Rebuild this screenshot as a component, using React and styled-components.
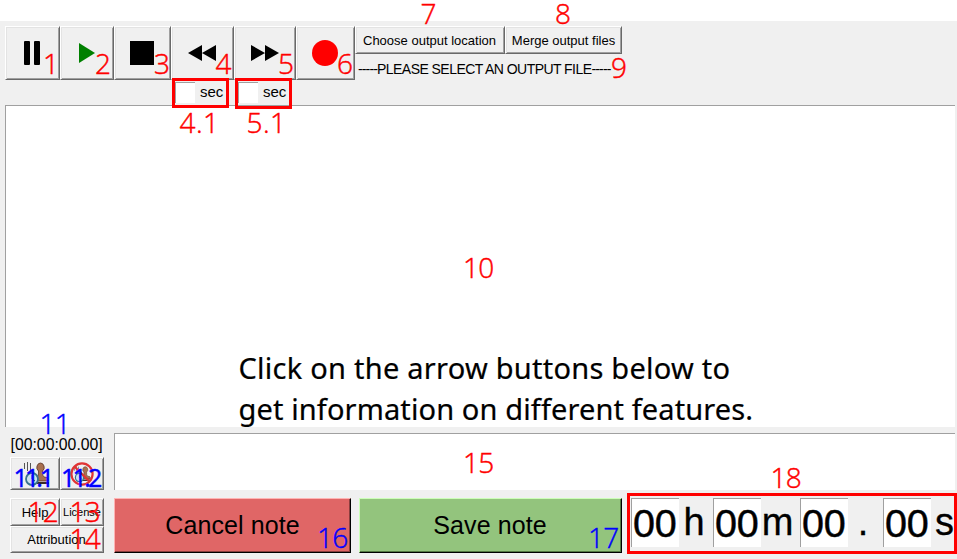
import React from "react";
import styled, { createGlobalStyle } from "styled-components";

const Global = createGlobalStyle`
  * { box-sizing: border-box; }
  body { margin: 0; background: #fff; overflow: hidden; }
`;

const Page = styled.div`
  position: relative;
  width: 957px;
  height: 559px;
  padding-top: 21px;
  overflow: hidden;
  font-family: "Liberation Sans", Arial, sans-serif;
  color: #000;
  background: #fff;
`;

const Window = styled.main`
  height: 538px;
  padding: 5px 2px 0 5px;
  display: flex;
  flex-direction: column;
  background: #f0f0f0;
`;

const Toolbar = styled.header`
  display: flex;
  height: 79px;
  align-items: flex-start;
`;

const Button = styled.button`
  display: flex;
  align-items: center;
  justify-content: center;
  flex: none;
  width: ${(p) => p.$w}px;
  height: ${(p) => p.$h}px;
  margin: 0;
  padding: 0 ${(p) => p.$nudge || 0}px 0 0;
  border: 1px solid;
  border-color: #fff #696969 #696969 #fff;
  box-shadow: inset 1px 1px #e3e3e3, inset -1px -1px #a0a0a0;
  background: #f0f0f0;
  color: #000;
  font-family: inherit;
  font-size: ${(p) => p.$size || 13}px;
  letter-spacing: ${(p) => p.$track || 0}px;
  white-space: nowrap;
`;

const NoteButton = styled(Button)`
  font-size: 25px;
  letter-spacing: 0.1px;
  background: ${(p) => p.$bg};
  border-color: ${(p) => p.$light} #000 #000 ${(p) => p.$light};
  box-shadow: inset -1px -1px ${(p) => p.$shade};
`;

const SeekColumn = styled.div`
  display: flex;
  flex-direction: column;
`;

const Seconds = styled.div`
  display: flex;
  width: 57px;
  height: ${(p) => p.$h}px;
  margin: -2px 0 0 1px;
  padding: 1px 0 0 0;
  border: 3px solid #f00;
  font-size: 15px;
  line-height: 20px;
  z-index: 1;
`;

const Entry = styled.div`
  flex: none;
  width: ${(p) => p.$w}px;
  height: ${(p) => p.$h}px;
  border: solid #a0a0a0;
  border-width: 1px 0 0 1px;
  background: #fff;
`;

const Unit = styled.span`
  margin-left: 5px;
`;

const OutputColumn = styled.div`
  display: flex;
  flex-direction: column;
`;

const Row = styled.div`
  display: flex;
`;

const Status = styled.div`
  margin: 7px 0 0 3px;
  font-size: 14px;
  line-height: 17px;
  letter-spacing: -0.55px;
  white-space: nowrap;
`;

const Dashes = styled.span`
  letter-spacing: -0.85px;
`;

const Notes = styled.section`
  height: 322px;
  border: solid #a0a0a0;
  border-width: 1px 0 0 1px;
  background: #fff;
`;

const Footer = styled.footer`
  display: grid;
  grid-template-columns: 109px 841px;
  padding-top: 6px;
`;

const SidePanel = styled.div`
  padding: 0 0 0 5px;
`;

const Stamp = styled.div`
  height: 24px;
  font-size: 15.8px;
  line-height: 23px;
  white-space: nowrap;
  margin-left: 0.5px;
`;

const HelpGroup = styled.div`
  margin-top: 8px;
`;

const Actions = styled.div`
  display: flex;
  gap: 8px;
  margin-top: 8px;
`;

const Timer = styled.div`
  display: flex;
  width: 330px;
  height: 61px;
  margin: -5px -2px 0 -3px;
  padding: 2px 0 0 1px;
  border: 3px solid #f00;
  flex: none;
  font-size: 39.5px;
  line-height: 48px;
`;

const TimeField = styled(Entry)`
  width: 48px;
  height: 49px;
  padding-left: 1px;
  letter-spacing: -0.3px;
  white-space: nowrap;
  -webkit-text-stroke: 0.5px #000;
`;

const TimeUnit = styled.span`
  flex: none;
  width: ${(p) => p.$w}px;
  padding-right: ${(p) => p.$end || 0}px;
  font-size: 38px;
  text-align: center;
  -webkit-text-stroke: 0.3px #000;
`;

const Mark = styled.span`
  position: absolute;
  left: ${(p) => p.$x}px;
  top: ${(p) => p.$base - 26}px;
  font: ${(p) => p.$weight || 300} ${(p) => p.$size || 28}px/30px "Open Sans", "Noto Sans", sans-serif;
  letter-spacing: ${(p) => p.$track ?? -0.7}px;
  color: ${(p) => (p.$blue ? "#00f" : "#f00")};
  -webkit-text-stroke: 0.45px currentColor;
  white-space: nowrap;
  z-index: 2;
`;

const Caption = styled.p`
  position: absolute;
  left: 238.500px;
  top: 347px;
  margin: 0;
  font: 400 29px/41px "Noto Sans", "Open Sans", sans-serif;
  white-space: nowrap;
  -webkit-text-stroke: 0.2px #000;
`;

const Line = styled.span`
  display: block;
  letter-spacing: ${(p) => p.$track}px;
`;

const Svg = styled.svg`
  display: block;
  flex: none;
  overflow: visible;
`;

const PauseIcon = () => (
  <Svg width="16" height="24"><rect width="6" height="24" rx="1" /><rect x="10" width="6" height="24" rx="1" /></Svg>
);
const PlayIcon = () => (
  <Svg width="16" height="20"><path d="M0 0 16 10 0 20Z" fill="#008000" /></Svg>
);
const StopIcon = () => (
  <Svg width="24" height="24"><rect width="24" height="24" /></Svg>
);
const RewindIcon = () => (
  <Svg width="28" height="16"><path d="M0 8 14 0V16ZM14 8 28 0V16Z" /></Svg>
);
const ForwardIcon = () => (
  <Svg width="28" height="16"><path d="M0 0 14 8 0 16ZM14 0 28 8 14 16Z" /></Svg>
);
const RecordIcon = () => (
  <Svg width="26" height="26"><circle cx="13" cy="13" r="13" fill="#f00" /></Svg>
);

const StampDrawing = () => (
  <>
    <path d="M3.5 1v6M6.5 0v9M9.5 1v9" stroke="#555" strokeWidth="1" fill="none" />
    <path d="M13 19v-2q0-2 3-2 2-1 1.500-6-2.500-2-1.500-5 1-3 3.500-3t3.500 3q1 3-1.500 5-.5 5 1.500 6 4 0 4 2v2Z" fill="#a8704f" stroke="#5b3424" strokeWidth=".8" />
    <path d="M14 21h14" stroke="#3a2a24" strokeWidth="2" />
    <circle cx="11" cy="17" r="6" fill="#cfe3ec" stroke="#39738f" strokeWidth="1.8" />
    <path d="M11 13v4l3 2" fill="none" stroke="#315263" />
  </>
);
const StampIcon = () => (
  <Svg width="28" height="24"><StampDrawing /></Svg>
);
const NoStampIcon = () => (
  <Svg width="24" height="24">
    <g transform="translate(2 4) scale(.68)"><StampDrawing /></g>
    <circle cx="12" cy="12" r="10.6" fill="none" stroke="#e03434" strokeWidth="2.2" />
    <path d="m4.5 4.5 15 15" stroke="#e03434" strokeWidth="2.2" />
  </Svg>
);

const marks = [
  ["1", 43, 74], ["2", 95, 74], ["3", 154, 74], ["4", 215.5, 74], ["5", 278, 74], ["6", 337, 74],
  ["7", 420.5, 24], ["8", 555, 24], ["9", 611, 78],
  ["4.1", 179.5, 133, 0.4], ["5.1", 246.5, 133, 0.4], ["10", 463, 278],
  ["12", 27.5, 522], ["13", 69.5, 522], ["14", 69.5, 549],
  ["15", 463, 473], ["18", 770.5, 488],
];
const blueMarks = [["11", 39.5, 434], ["16", 317, 548], ["17", 588, 548]];

export default function App() {
  return (
    <Page>
      <Global />
      <Window>
        <Toolbar>
          <Button $w={55} $h={54} $nudge={1}><PauseIcon /></Button>
          <Button $w={54} $h={54}><PlayIcon /></Button>
          <Button $w={57} $h={54} $nudge={2}><StopIcon /></Button>
          <SeekColumn>
            <Button $w={63} $h={54} $nudge={1}><RewindIcon /></Button>
            <Seconds $h={30}><Entry $w={20} $h={21} /><Unit>sec</Unit></Seconds>
          </SeekColumn>
          <SeekColumn>
            <Button $w={62} $h={54}><ForwardIcon /></Button>
            <Seconds $h={31}><Entry $w={20} $h={21} /><Unit>sec</Unit></Seconds>
          </SeekColumn>
          <Button $w={59} $h={54} $nudge={2}><RecordIcon /></Button>
          <OutputColumn>
            <Row>
              <Button $w={150} $h={28} $nudge={1}>Choose output location</Button>
              <Button $w={117} $h={28}>Merge output files</Button>
            </Row>
            <Status><Dashes>-----</Dashes>PLEASE SELECT AN OUTPUT FILE<Dashes>-----</Dashes></Status>
          </OutputColumn>
        </Toolbar>
        <Notes />
        <Footer>
          <SidePanel>
            <Stamp>[00:00:00.00]</Stamp>
            <Row>
              <Button $w={50} $h={33}><StampIcon /></Button>
              <Button $w={44} $h={33}><NoStampIcon /></Button>
            </Row>
            <HelpGroup>
              <Row>
                <Button $w={50} $h={28}>Help</Button>
                <Button $w={44} $h={28} $size={11}>License</Button>
              </Row>
              <Button $w={94} $h={27} $nudge={1}>Attribution</Button>
            </HelpGroup>
          </SidePanel>
          <div>
            <Entry $w={841} $h={57} />
            <Actions>
              <NoteButton $w={237} $h={55} $bg="#e06666" $light="#ffb3b3" $shade="#8a3e3e">Cancel note</NoteButton>
              <NoteButton $w={263} $h={55} $nudge={1} $bg="#93c47d" $light="#ccffb8" $shade="#527a42">Save note</NoteButton>
              <Timer>
                <TimeField>00</TimeField><TimeUnit $w={34} $end={4}>h</TimeUnit>
                <TimeField>00</TimeField><TimeUnit $w={39} $end={6}>m</TimeUnit>
                <TimeField>00</TimeField><TimeUnit $w={35} $end={5}>.</TimeUnit>
                <TimeField>00</TimeField><TimeUnit $w={27}>s</TimeUnit>
              </Timer>
            </Actions>
          </div>
        </Footer>
      </Window>
      <Caption>
        <Line $track={0.25}>Click on the arrow buttons below to</Line>
        <Line $track={0.12}>get information on different features.</Line>
      </Caption>
      {marks.map(([t, x, b, track]) => <Mark key={t} $x={x} $base={b} $track={track}>{t}</Mark>)}
      {blueMarks.map(([t, x, b]) => <Mark key={t} $x={x} $base={b} $blue>{t}</Mark>)}
      <Mark $x={13.5} $base={488} $size={25} $weight={400} $track={-2.9} $blue>11.1</Mark>
      <Mark $x={61} $base={488} $size={25} $weight={400} $track={-2.7} $blue>11.2</Mark>
    </Page>
  );
}
